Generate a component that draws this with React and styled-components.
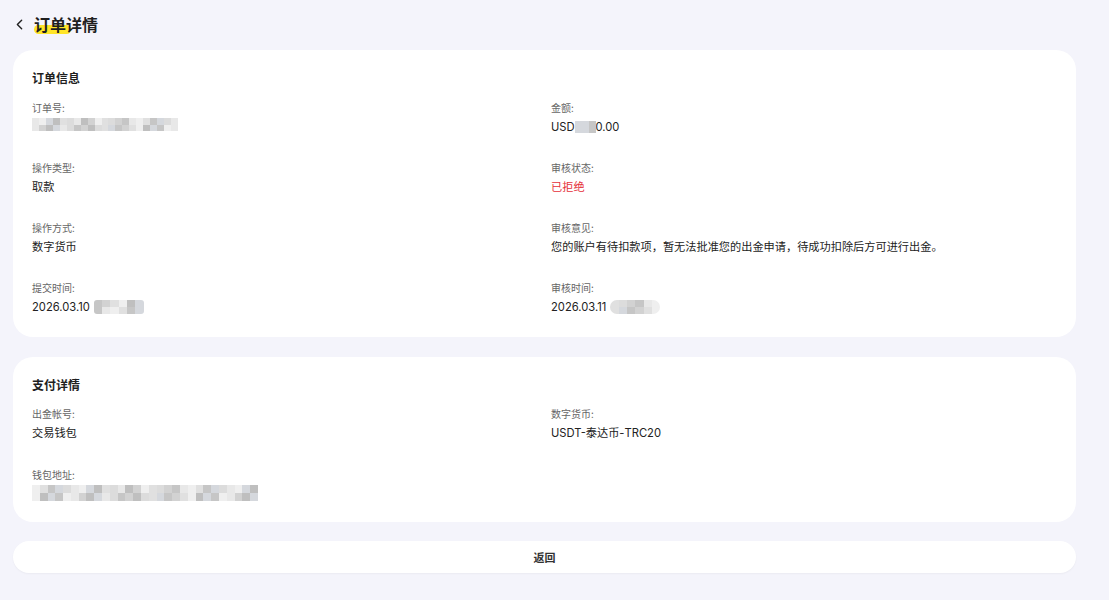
import React from 'react';
import styled, { createGlobalStyle } from 'styled-components';
import { ChevronLeft } from 'lucide-react';

const GlobalStyle = createGlobalStyle`
  html, body {
    margin: 0;
    padding: 0;
    background: #f4f4fb;
  }
  body {
    font-family: "Noto Sans CJK SC", "Noto Sans", sans-serif;
    color: #222;
  }
`;

const Page = styled.div`
  width: 1109px;
  height: 600px;
  box-sizing: border-box;
  padding: 0 33px 0 13px;
  display: flex;
  flex-direction: column;
`;

const Header = styled.div`
  height: 50px;
  display: flex;
  align-items: center;
  gap: 6px;
  padding-bottom: 2px;
  box-sizing: border-box;
  svg {
    margin-left: -2px;
  }
`;

const PageTitle = styled.h1`
  margin: 0;
  font-size: 16px;
  line-height: 22px;
  font-weight: 700;
  color: #1f1f1f;
  position: relative;
  z-index: 0;
  &::before {
    content: '';
    position: absolute;
    left: 0;
    top: 12px;
    width: 37px;
    height: 9px;
    border-radius: 5px;
    background: #ffe528;
    z-index: -1;
  }
`;

const Card = styled.section`
  background: #fff;
  border-radius: 20px;
  padding: 20px 19px 21px;
  margin-bottom: ${p => p.$mb || 20}px;
`;

const CardTitle = styled.h2`
  margin: 0 0 ${p => p.$mb || 15}px;
  font-size: 12px;
  line-height: 16px;
  font-weight: 700;
  color: #1f1f1f;
`;

const Grid = styled.div`
  display: grid;
  grid-template-columns: 1fr 1fr;
  column-gap: 13px;
  row-gap: ${p => p.$gap || 25}px;
`;

const Field = styled.div`
  display: flex;
  flex-direction: column;
  gap: 3px;
`;

const Label = styled.div`
  font-size: 10px;
  line-height: 14px;
  color: #666;
`;

const Value = styled.div`
  font-family: Inter, "Noto Sans CJK SC", sans-serif;
  font-size: 11.2px;
  line-height: 18px;
  color: ${p => (p.$danger ? '#e5303a' : '#222')};
  display: flex;
  align-items: center;
  gap: ${p => p.$gap || 0}px;
`;

const MosaicBox = styled.div`
  display: inline-grid;
  grid-auto-flow: column;
  grid-template-rows: repeat(${p => p.$rows}, 1fr);
  width: ${p => p.$w}px;
  height: ${p => p.$h}px;
  border-radius: ${p => p.$radius || 0}px;
  overflow: hidden;
  filter: blur(0.6px);
  flex-shrink: 0;
`;

const Cell = styled.span`
  display: block;
`;

const shades = ['#dcdcdc', '#c6c6c6', '#e8e8e8', '#d2d2d2', '#efefef', '#bfbfbf', '#e0e0e0', '#d5d8dd'];

function Mosaic({ w, h, rows = 2, cell = 7, radius, seed = 1 }) {
  const cols = Math.ceil(w / cell);
  const cells = [];
  for (let i = 0; i < cols * rows; i++) {
    const k = (i * 7 + seed * 13 + ((i * i) % 5)) % shades.length;
    cells.push(<Cell key={i} style={{ background: shades[k] }} />);
  }
  return (
    <MosaicBox $w={w} $h={h} $rows={rows} $radius={radius}>
      {cells}
    </MosaicBox>
  );
}

const BackButton = styled.button`
  height: 32px;
  width: 100%;
  border: none;
  border-radius: 16px;
  background: #fff;
  font-family: inherit;
  font-size: 11px;
  font-weight: 700;
  color: #333;
  box-shadow: 0 1px 2px rgba(0, 0, 0, 0.04);
  cursor: pointer;
`;

export default function App() {
  return (
    <>
      <GlobalStyle />
      <Page>
        <Header>
          <ChevronLeft size={17} strokeWidth={2} color="#222" />
          <PageTitle>订单详情</PageTitle>
        </Header>

        <Card>
          <CardTitle>订单信息</CardTitle>
          <Grid>
            <Field>
              <Label>订单号:</Label>
              <Value>
                <Mosaic w={146} h={13} seed={2} />
              </Value>
            </Field>
            <Field>
              <Label>金额:</Label>
              <Value>
                USD
                <Mosaic w={21} h={12} rows={1} cell={8} seed={3} />
                0.00
              </Value>
            </Field>
            <Field>
              <Label>操作类型:</Label>
              <Value>取款</Value>
            </Field>
            <Field>
              <Label>审核状态:</Label>
              <Value $danger>已拒绝</Value>
            </Field>
            <Field>
              <Label>操作方式:</Label>
              <Value>数字货币</Value>
            </Field>
            <Field>
              <Label>审核意见:</Label>
              <Value>您的账户有待扣款项，暂无法批准您的出金申请，待成功扣除后方可进行出金。</Value>
            </Field>
            <Field>
              <Label>提交时间:</Label>
              <Value $gap={4}>
                2026.03.10
                <Mosaic w={50} h={14} rows={2} cell={9} radius={3} seed={5} />
              </Value>
            </Field>
            <Field>
              <Label>审核时间:</Label>
              <Value $gap={4}>
                2026.03.11
                <Mosaic w={50} h={14} rows={2} cell={9} radius={7} seed={6} />
              </Value>
            </Field>
          </Grid>
        </Card>

        <Card $mb={19}>
          <CardTitle $mb={14}>支付详情</CardTitle>
          <Grid $gap={26}>
            <Field>
              <Label>出金帐号:</Label>
              <Value>交易钱包</Value>
            </Field>
            <Field>
              <Label>数字货币:</Label>
              <Value>USDT-泰达币-TRC20</Value>
            </Field>
            <Field>
              <Label>钱包地址:</Label>
              <Value>
                <Mosaic w={226} h={16} rows={2} cell={8} seed={4} />
              </Value>
            </Field>
          </Grid>
        </Card>

        <BackButton>返回</BackButton>
      </Page>
    </>
  );
}
